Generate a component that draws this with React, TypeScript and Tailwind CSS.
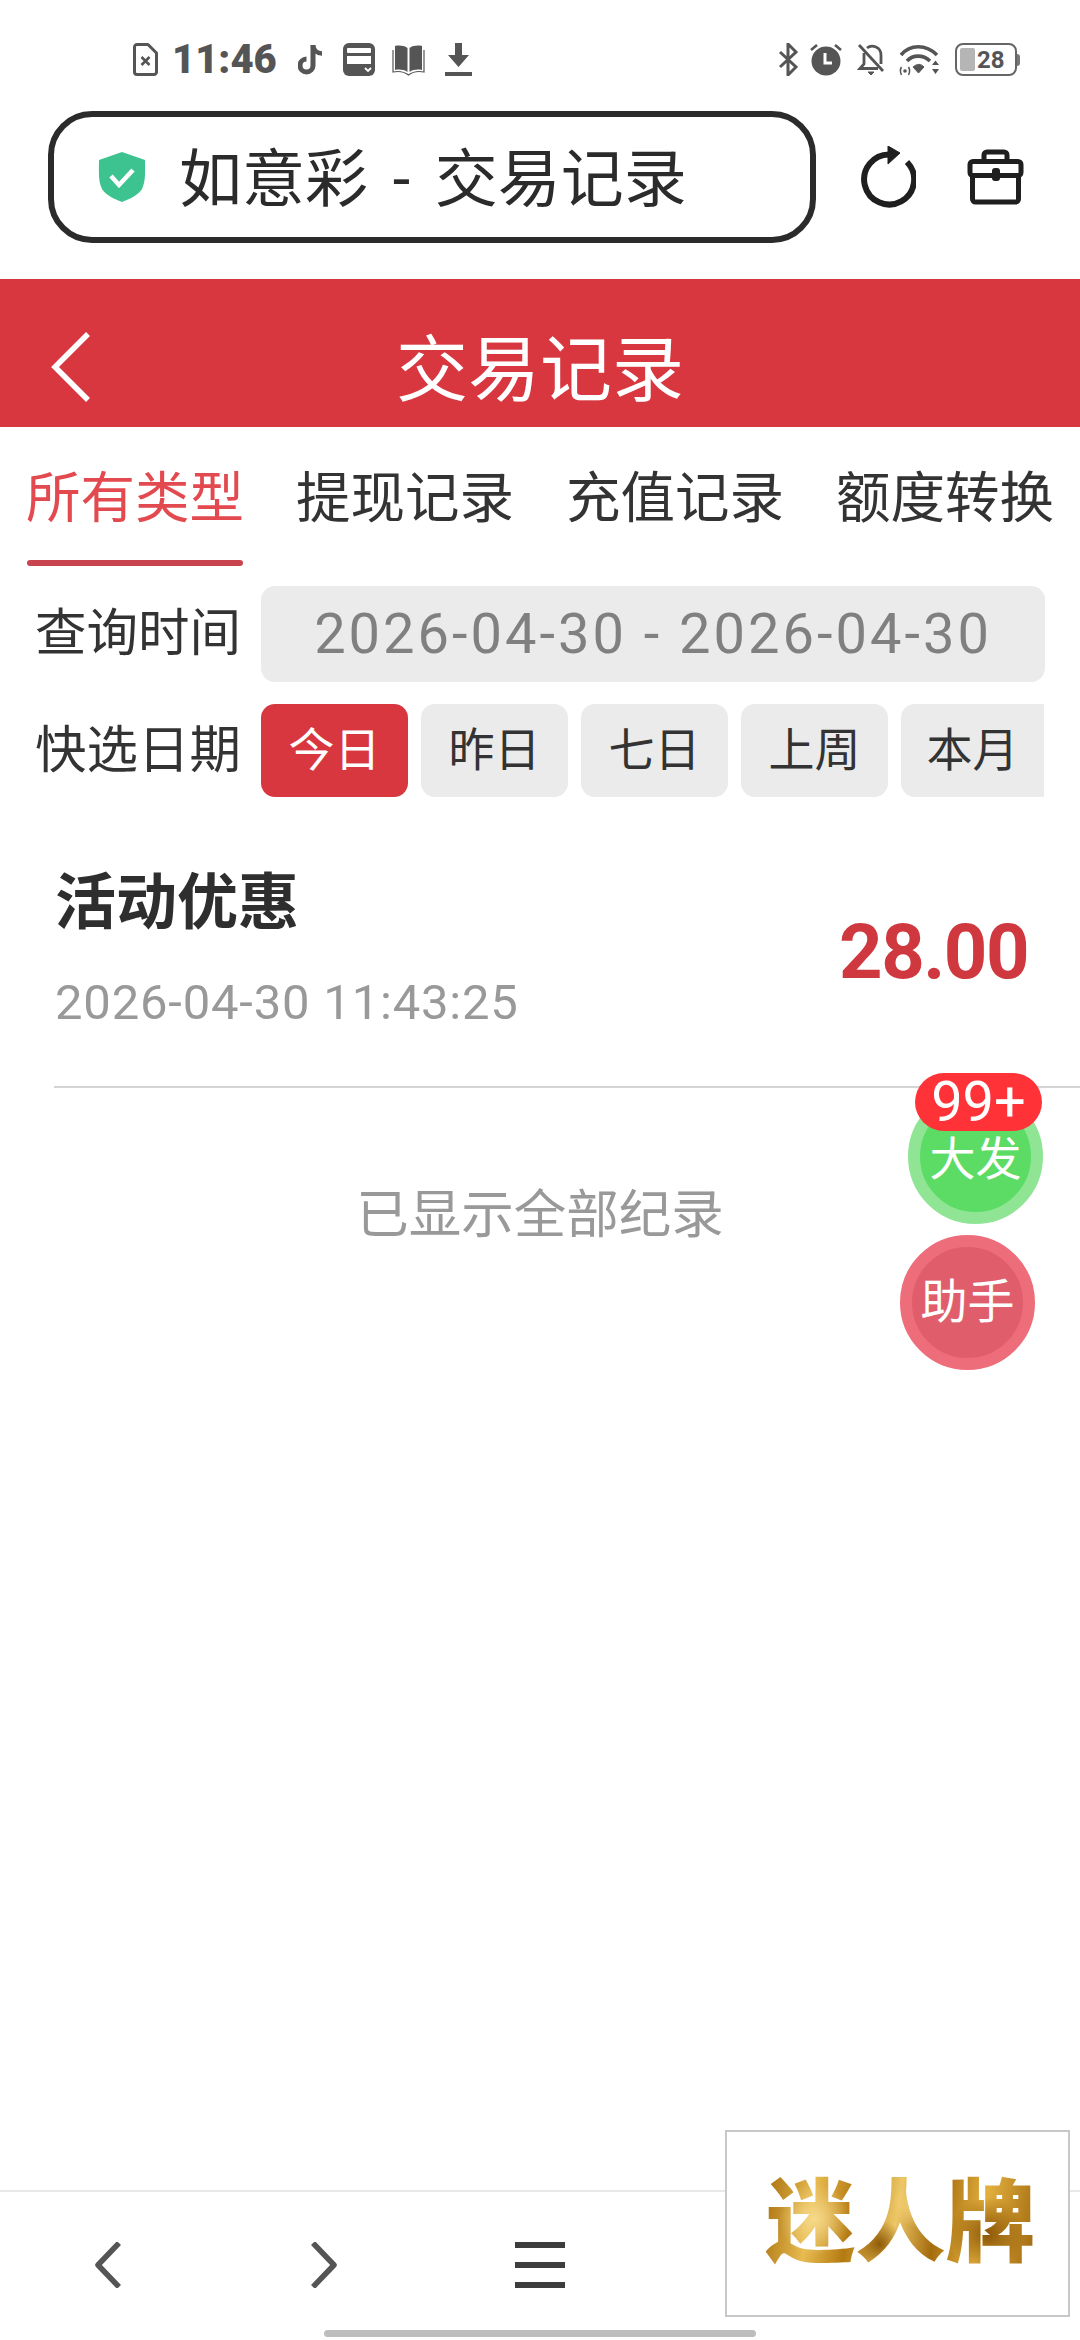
const tabs = ["所有类型", "提现记录", "充值记录", "额度转换"];
const quickDates = ["昨日", "七日", "上周"];

function StatusLeft() {
  return (
    <div className="flex items-center pl-[133px] text-[#555]">
      {/* sim */}
      <svg width="25" height="33" viewBox="0 0 25 33" fill="none" stroke="currentColor" strokeWidth="3">
        <path d="M4 1.5h11l8.500 8.500v19a2.500 2.500 0 0 1-2.500 2.500H4A2.500 2.500 0 0 1 1.500 29V4A2.500 2.500 0 0 1 4 1.500z" strokeLinejoin="round" />
        <path d="M8.500 14l8 8M16.500 14l-8 8" strokeWidth="2.600" />
      </svg>
      <span className="ml-[14px] w-[107px] text-[40px] leading-[33px] font-black whitespace-nowrap">11:46</span>
      {/* tiktok */}
      <svg className="ml-[19px]" width="26" height="33" viewBox="0 0 26 33" fill="none" stroke="currentColor" strokeWidth="5">
        <path d="M15 2v20.500a6.500 6.500 0 1 1-6.500-6.500" />
        <path d="M15 2c0 5 4 8.500 9 8.500" strokeWidth="4.500" />
      </svg>
      {/* card */}
      <svg className="ml-[19px]" width="32" height="33" viewBox="0 0 32 33">
        <rect width="32" height="33" rx="6" fill="currentColor" />
        <rect x="4" y="5" width="24" height="5" rx="1" fill="#fff" />
        <rect x="4" y="13" width="24" height="8" fill="#fff" />
        <path d="M22 25l3 3 3-3" fill="none" stroke="#fff" strokeWidth="1.800" />
      </svg>
      {/* book */}
      <svg className="ml-[17px]" width="33" height="33" viewBox="0 0 33 33" fill="currentColor">
        <path d="M15.500 5C12 2.500 7 2 3 3v24c4-1 9-.5 12.500 2z" />
        <path d="M17.500 5C21 2.500 26 2 30 3v24c-4-1-9-.5-12.500 2z" />
        <path d="M1 7v22c5-1 11-.5 15.500 3C21 28.500 27 28 32 29V7" fill="none" stroke="currentColor" strokeWidth="1.200" />
      </svg>
      {/* download */}
      <svg className="ml-[20px]" width="27" height="33" viewBox="0 0 27 33" fill="currentColor">
        <path d="M10 0h7v12h7L13.500 24 3 12h7z" />
        <rect y="29" width="27" height="4" />
      </svg>
    </div>
  );
}

function StatusRight() {
  return (
    <div className="flex items-center pr-[60px] text-[#555]">
      {/* bluetooth */}
      <svg width="20" height="33" viewBox="0 0 20 33" fill="none" stroke="currentColor" strokeWidth="3">
        <path d="M2 9l16 15-8 8V1l8 8L2 24" />
      </svg>
      {/* alarm */}
      <svg className="ml-[12px]" width="32" height="33" viewBox="0 0 32 33">
        <circle cx="16" cy="18" r="14.500" fill="currentColor" />
        <path d="M15 10v10h7" fill="none" stroke="#fff" strokeWidth="3" />
        <path d="M1 7l6-5M31 7l-6-5" fill="none" stroke="currentColor" strokeWidth="2.600" />
      </svg>
      {/* muted bell */}
      <svg className="ml-[15px]" width="28" height="33" viewBox="0 0 28 33" fill="none" stroke="currentColor" strokeWidth="2.800">
        <path d="M2 2l24 26" />
        <path d="M7 10v11l-4 4.500h18" />
        <path d="M10 5c5-4 14-1 14 7v9" />
        <path d="M11 29h6l-3 3z" fill="currentColor" strokeWidth="1" />
      </svg>
      {/* wifi */}
      <svg className="ml-[14px]" width="41" height="33" viewBox="0 0 41 33" fill="none" stroke="currentColor" strokeWidth="3.600">
        <path d="M2 12C11 1 27 1 38 12" />
        <path d="M8 18c6-6.500 16-6.500 23 0" />
        <path d="M14 24c4-3.500 8-3.500 11 0l-5.500 6z" fill="currentColor" strokeWidth="1" />
        <circle cx="6" cy="28" r="1.800" fill="currentColor" stroke="none" />
        <path d="M2.500 24c-1.500 2.500-1.500 5 0 8M9.500 24c1.500 2.500 1.500 5 0 8" strokeWidth="1.500" />
        <path d="M33 22l3.500-4.500L40 22zM33 26h7l-3.500 5z" fill="currentColor" stroke="none" />
      </svg>
      {/* battery */}
      <div className="ml-[15px] flex items-center">
        <div className="w-[62px] h-[33px] rounded-[8px] border-[2.5px] border-[#666] p-[3px] flex items-center">
          <div className="w-[15px] h-full bg-[#b5b5b5] rounded-[2px]" />
          <span className="ml-[2px] text-[24px] leading-none font-bold text-[#555]">28</span>
        </div>
        <div className="w-[3px] h-[12px] bg-[#777] rounded-r-sm" />
      </div>
    </div>
  );
}

export default function App() {
  return (
    <div className="relative w-[1080px] h-[2340px] overflow-hidden bg-white flex flex-col font-['Roboto','Noto_Sans_CJK_SC',sans-serif]">
      {/* system + browser bar */}
      <div className="h-[279px] pt-[43px]">
        <div className="flex items-center justify-between h-[33px]">
          <StatusLeft />
          <StatusRight />
        </div>
        <div className="flex items-center mt-[35px] pl-[48px]">
          <div className="w-[768px] h-[132px] rounded-[44px] border-[6px] border-[#2b2b2b] flex items-center pl-[43px]">
            <svg width="50" height="50" viewBox="0 0 50 50">
              <path d="M25 0l23 8c0 10 1 21-3 29-4 6-12 10-20 13C17 47 9 43 5 37 1 29 2 18 2 8z" fill="#3cc38f" />
              <path d="M14 24l8 9 14-15" fill="none" stroke="#fff" strokeWidth="4.500" />
            </svg>
            <span className="ml-[32px] mt-[6px] text-[63px] leading-[70px] text-[#2b2b2b] whitespace-nowrap [word-spacing:9px]">如意彩 - 交易记录</span>
          </div>
          <svg className="ml-[44px]" width="56" height="62" viewBox="0 0 56 62" fill="none" stroke="#1f1f1f" strokeWidth="6">
            <path d="M30 8.500A25 25 0 1 0 47 16" />
            <path d="M28 0l12 7-12 11z" fill="#1f1f1f" strokeWidth="1" strokeLinejoin="round" />
          </svg>
          <svg className="ml-[51px]" width="57" height="56" viewBox="0 0 57 56" fill="none" stroke="#1f1f1f" strokeWidth="5">
            <path d="M17 11V6a3 3 0 0 1 3-3h17a3 3 0 0 1 3 3v5" />
            <rect x="3" y="12.500" width="51" height="14" rx="3" />
            <path d="M5.500 26v24a3 3 0 0 0 3 3h40a3 3 0 0 0 3-3V26" />
            <rect x="25" y="19" width="8" height="13" rx="3" fill="#1f1f1f" strokeWidth="0" />
          </svg>
        </div>
      </div>

      {/* title bar */}
      <div className="h-[148px] bg-[#d8373f] grid grid-cols-[1fr_auto_1fr] items-center">
        <div className="pl-[50px] mt-[28px]">
          <svg width="40" height="70" viewBox="0 0 40 70" fill="none" stroke="#fff" strokeWidth="5.500">
            <path d="M38 2L5 35l33 33" />
          </svg>
        </div>
        <span className="mt-[36px] text-[72px] leading-[80px] text-white">交易记录</span>
        <div />
      </div>

      {/* tabs */}
      <div className="flex justify-between px-[27px] h-[139px]">
        {tabs.map((tab, i) => (
          <div key={tab} className="w-[216px] flex flex-col items-center">
            <span className={`mt-[41px] text-[54.5px] leading-[60px] whitespace-nowrap ${i === 0 ? "text-[#e34a4f]" : "text-[#333]"}`}>{tab}</span>
            {i === 0 && <div className="mt-[32px] w-full h-[6px] rounded-full bg-[#c8444e]" />}
          </div>
        ))}
      </div>

      {/* filters */}
      <div className="mt-[20px] flex items-center pl-[35px]">
        <span className="w-[226px] text-[51.5px] leading-[60px] text-[#333] whitespace-nowrap">查询时间</span>
        <div className="w-[784px] h-[96px] rounded-[14px] bg-[#ebebeb] flex items-center justify-center text-[56px] tracking-[3px] text-[#808080] whitespace-nowrap">
          2026-04-30 - 2026-04-30
        </div>
      </div>
      <div className="mt-[22px] flex items-center pl-[35px]">
        <span className="w-[226px] text-[51.5px] leading-[60px] text-[#333] whitespace-nowrap">快选日期</span>
        <div className="flex gap-[13px]">
          <div className="w-[147px] h-[93px] rounded-[14px] bg-[#d8373f] text-white text-[46px] flex items-center justify-center">今日</div>
          {quickDates.map((d) => (
            <div key={d} className="w-[147px] h-[93px] rounded-[14px] bg-[#ebebeb] text-[#333] text-[46px] flex items-center justify-center">{d}</div>
          ))}
          <div className="w-[143px] h-[93px] rounded-l-[14px] bg-[#ebebeb] text-[#333] text-[46px] flex items-center justify-center">本月</div>
        </div>
      </div>

      {/* record */}
      <div className="flex items-center justify-between pl-[55px] pr-[52px] pt-[76px] pb-[53px]">
        <div className="flex flex-col">
          <span className="text-[61px] leading-[60px] font-bold text-[#2e2e2e]">活动优惠</span>
          <span className="mt-[40px] text-[49px] leading-[60px] tracking-[0.8px] text-[#999]">2026-04-30 11:43:25</span>
        </div>
        <span className="mt-[-3px] text-[76px] leading-[80px] font-bold tracking-[-1.5px] text-[#d0383f]">28.00</span>
      </div>
      <div className="ml-[54px] h-[2px] bg-[#d4d4d4]" />
      <div className="mt-[97px] text-center text-[52.5px] leading-[60px] text-[#999]">已显示全部纪录</div>

      {/* footer nav */}
      <div className="mt-auto h-[150px] border-t-2 border-[#e8e8e8] grid grid-cols-5 items-center">
        <div className="flex justify-center mt-[-2px]">
          <svg width="28" height="46" viewBox="0 0 28 46" fill="none" stroke="#555" strokeWidth="5.500"><path d="M25 1L4 23l21 22" strokeLinejoin="round" /></svg>
        </div>
        <div className="flex justify-center mt-[-2px]">
          <svg width="28" height="46" viewBox="0 0 28 46" fill="none" stroke="#555" strokeWidth="5.500"><path d="M3 1l21 22L3 45" strokeLinejoin="round" /></svg>
        </div>
        <div className="flex flex-col items-center gap-[14px] mt-[-2px]">
          <div className="w-[50px] h-[6px] bg-[#3d3d3d]" />
          <div className="w-[50px] h-[6px] bg-[#3d3d3d]" />
          <div className="w-[50px] h-[6px] bg-[#3d3d3d]" />
        </div>
      </div>

      {/* floating buttons */}
      <div className="absolute left-[908px] top-[1089px] w-[135px] h-[135px] rounded-full border-[12px] border-[#90e595] bg-[#5cdb65] text-white text-[46px] pt-[6px] flex items-center justify-center">大发</div>
      <div className="absolute left-[915px] top-[1073px] w-[127px] h-[58px] rounded-full bg-[#ff3238] text-white text-[56px] leading-[58px] text-center">99+</div>
      <div className="absolute left-[900px] top-[1235px] w-[135px] h-[135px] rounded-full border-[12px] border-[#ee6d7a] bg-[#e05e6c] text-white text-[47px] flex items-center justify-center">助手</div>

      {/* ad */}
      <div className="absolute left-[725px] top-[2130px] w-[345px] h-[187px] border-2 border-[#c8c8c8] bg-white flex items-center justify-center pl-[6px]">
        <span className="text-[90px] leading-[100px] font-black whitespace-nowrap bg-clip-text text-transparent bg-[radial-gradient(circle_at_18%_45%,#f6d98a_0,transparent_16%),radial-gradient(circle_at_42%_70%,#8f5a08_0,transparent_14%),radial-gradient(circle_at_55%_30%,#f3cf78_0,transparent_14%),radial-gradient(circle_at_82%_60%,#8c5607_0,transparent_16%),linear-gradient(100deg,#a8700f_0%,#e8bb4f_18%,#b47a12_32%,#edc766_48%,#a56c0e_62%,#e3b03e_78%,#9c640c_100%)]">迷人牌</span>
      </div>

      {/* home indicator */}
      <div className="absolute left-[324px] top-[2330px] w-[432px] h-[7px] rounded-full bg-[#bdbdbd]" />
    </div>
  );
}
